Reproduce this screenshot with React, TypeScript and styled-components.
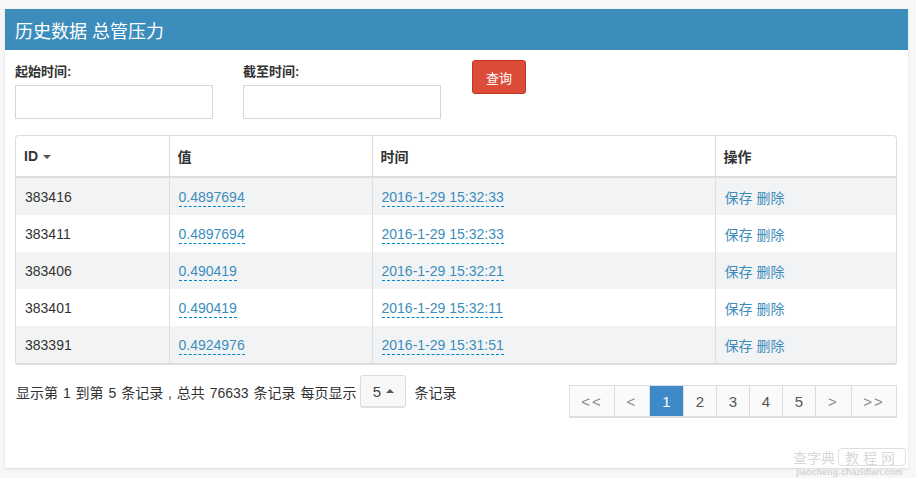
import React from 'react';
import styled, { createGlobalStyle } from 'styled-components';

const FONT = `"Liberation Sans", "Noto Sans CJK SC", sans-serif`;

const GlobalStyle = createGlobalStyle`
	html, body {
		margin: 0;
		padding: 0;
		background: #f7f7f7;
		font-family: ${FONT};
		color: #333;
	}
`;

const Page = styled.div`
	padding: 9px 8px 0 5px;
	height: 478px;
	box-sizing: border-box;
	position: relative;
	overflow: hidden;
`;

const Box = styled.div`
	width: 903px;
	background: #fff;
	box-shadow: 0 1px 2px rgba(0, 0, 0, 0.12);
	padding-bottom: 50px;
`;

const BoxHeader = styled.div`
	height: 41px;
	background: #3c8dbc;
	color: #fff;
	font-size: 18px;
	display: flex;
	align-items: center;
	padding-left: 10px;
`;

const BoxBody = styled.div`
	padding: 10px 11px 0 10px;
`;

const FilterRow = styled.div`
	display: flex;
	align-items: flex-start;
	gap: 30px;
`;

const Field = styled.div`
	display: flex;
	flex-direction: column;
	padding-top: 3px;
`;

const FieldLabel = styled.label`
	font-size: 13px;
	font-weight: bold;
	height: 17px;
	line-height: 17px;
	margin-bottom: 5px;
`;

const Input = styled.input`
	width: 198px;
	height: 34px;
	box-sizing: border-box;
	border: 1px solid #d2d6de;
	outline: none;
`;

const DangerButton = styled.button`
	width: 54px;
	height: 34px;
	margin-left: 1px;
	background: #dd4b39;
	border: 1px solid #c23321;
	border-radius: 3px;
	color: #fff;
	font-size: 13px;
	font-family: ${FONT};
	padding: 0;
`;

const TableWrap = styled.div`
	margin-top: 16px;
	border: 1px solid #ddd;
	border-bottom-width: 2px;
	border-radius: 4px;
	overflow: hidden;
`;

const Table = styled.table`
	width: 100%;
	border-collapse: collapse;
	table-layout: fixed;
	font-size: 14px;
`;

const Th = styled.th<{ $w?: number }>`
	box-sizing: border-box;
	width: ${({ $w }) => ($w ? `${$w}px` : 'auto')};
	height: 41px;
	text-align: left;
	padding: 0 8px;
	font-weight: bold;
	border-bottom: 2px solid #ddd;
	border-left: 1px solid #ddd;
	&:first-child {
		border-left: none;
	}
`;

const Tr = styled.tr<{ $striped?: boolean }>`
	background: ${({ $striped }) => ($striped ? '#f2f3f4' : '#fff')};
	& + & td {
		border-top: 1px solid #ddd;
	}
`;

const Td = styled.td`
	height: 36px;
	padding: 1px 9px 0;
	border-left: 1px solid #ddd;
	&:first-child {
		border-left: none;
	}
`;

const Editable = styled.a`
	color: #3c8dbc;
	text-decoration: none;
	border-bottom: 1px dashed #0088cc;
	padding-bottom: 1px;
`;

const ActionLink = styled.a`
	color: #3c8dbc;
	text-decoration: none;
	font-size: 14px;
	margin-right: 4px;
`;

const Caret = styled.span<{ $up?: boolean }>`
	display: inline-block;
	margin-left: 5px;
	vertical-align: middle;
	border-left: 4px solid transparent;
	border-right: 4px solid transparent;
	${({ $up }) => ($up ? 'border-bottom: 4px solid #555;' : 'border-top: 4px solid #555;')}
`;

const Footer = styled.div`
	display: flex;
	justify-content: space-between;
	align-items: flex-start;
`;

const Detail = styled.div`
	display: flex;
	align-items: center;
	margin-top: 10px;
	font-size: 14px;
	word-spacing: 1px;
	padding-left: 1px;
	white-space: pre;
`;

const SizeButton = styled.button`
	width: 46px;
	height: 33px;
	margin: 0 8px 0 4px;
	background: #f8f8f8;
	border: 1px solid #ddd;
	border-bottom: 2px solid #e0e0e0;
	border-radius: 3px;
	font-family: ${FONT};
	font-size: 15px;
	color: #444;
	padding: 0;
	display: flex;
	align-items: center;
	justify-content: center;
`;

const Pagination = styled.ul`
	display: flex;
	list-style: none;
	margin: 20px 0 0;
	padding: 0;
	border-bottom: 2px solid #ddd;
`;

const PageItem = styled.li<{ $w: number; $active?: boolean; $muted?: boolean }>`
	width: ${({ $w }) => $w}px;
	height: 31px;
	box-sizing: border-box;
	display: flex;
	align-items: center;
	justify-content: center;
	font-size: 15px;
	border: 1px solid #ddd;
	border-bottom: none;
	margin-left: -1px;
	background: ${({ $active }) => ($active ? '#3e8ac8' : '#fafafa')};
	color: ${({ $active, $muted }) => ($active ? '#fff' : $muted ? '#888' : '#555')};
	letter-spacing: ${({ $muted }) => ($muted ? '2px' : '0')};
	&:first-child {
		margin-left: 0;
	}
`;

const Watermark = styled.div`
	position: absolute;
	right: 10px;
	bottom: 1px;
	color: rgba(140, 140, 140, 0.35);
	display: flex;
	flex-direction: column;
	align-items: center;
	gap: 1px;
`;

const WatermarkTitle = styled.div`
	display: flex;
	align-items: center;
	gap: 3px;
	font-size: 14px;
	line-height: 16px;
	font-family: "Noto Sans CJK SC", sans-serif;
`;

const WatermarkTag = styled.span`
	border: 1px solid rgba(160, 160, 160, 0.35);
	border-radius: 4px;
	padding: 0 6px;
	letter-spacing: 4px;
`;

const WatermarkUrl = styled.div`
	font-size: 9px;
	line-height: 10px;
	font-family: "Liberation Sans", sans-serif;
	font-weight: bold;
`;

const rows = [
	{ id: '383416', value: '0.4897694', time: '2016-1-29 15:32:33' },
	{ id: '383411', value: '0.4897694', time: '2016-1-29 15:32:33' },
	{ id: '383406', value: '0.490419', time: '2016-1-29 15:32:21' },
	{ id: '383401', value: '0.490419', time: '2016-1-29 15:32:11' },
	{ id: '383391', value: '0.4924976', time: '2016-1-29 15:31:51' },
];

const pages = [
	{ label: '<<', w: 46, muted: true },
	{ label: '<', w: 36, muted: true },
	{ label: '1', w: 35, active: true },
	{ label: '2', w: 34 },
	{ label: '3', w: 34 },
	{ label: '4', w: 34 },
	{ label: '5', w: 34 },
	{ label: '>', w: 37, muted: true },
	{ label: '>>', w: 46, muted: true },
];

export default function App() {
	return (
		<Page>
			<GlobalStyle />
			<Box>
				<BoxHeader>历史数据 总管压力</BoxHeader>
				<BoxBody>
					<FilterRow>
						<Field>
							<FieldLabel>起始时间:</FieldLabel>
							<Input />
						</Field>
						<Field>
							<FieldLabel>截至时间:</FieldLabel>
							<Input />
						</Field>
						<DangerButton>查询</DangerButton>
					</FilterRow>
					<TableWrap>
						<Table>
							<thead>
								<tr>
									<Th $w={153}>
										ID
										<Caret />
									</Th>
									<Th $w={203}>值</Th>
									<Th $w={343}>时间</Th>
									<Th>操作</Th>
								</tr>
							</thead>
							<tbody>
								{rows.map((r, i) => (
									<Tr key={r.id} $striped={i % 2 === 0}>
										<Td>{r.id}</Td>
										<Td>
											<Editable>{r.value}</Editable>
										</Td>
										<Td>
											<Editable>{r.time}</Editable>
										</Td>
										<Td>
											<ActionLink>保存</ActionLink>
											<ActionLink>删除</ActionLink>
										</Td>
									</Tr>
								))}
							</tbody>
						</Table>
					</TableWrap>
					<Footer>
						<Detail>
							{'显示第 1 到第 5 条记录 , 总共 76633 条记录 每页显示'}
							<SizeButton>
								5<Caret $up />
							</SizeButton>
							条记录
						</Detail>
						<Pagination>
							{pages.map((p) => (
								<PageItem key={p.label} $w={p.w} $active={p.active} $muted={p.muted}>
									{p.label}
								</PageItem>
							))}
						</Pagination>
					</Footer>
				</BoxBody>
			</Box>
			<Watermark>
				<WatermarkTitle>
					查字典
					<WatermarkTag>教程网</WatermarkTag>
				</WatermarkTitle>
				<WatermarkUrl>jiaocheng.chazidian.com</WatermarkUrl>
			</Watermark>
		</Page>
	);
}
